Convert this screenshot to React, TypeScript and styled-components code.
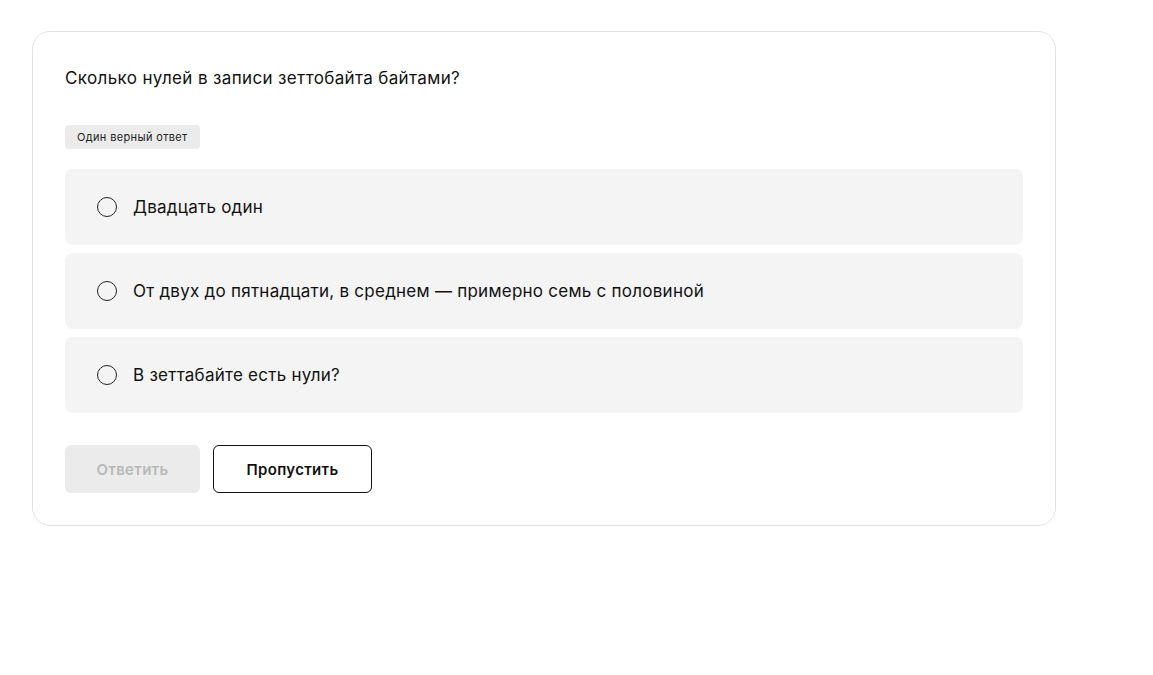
import React from "react";
import styled, { createGlobalStyle } from "styled-components";

const GlobalStyle = createGlobalStyle`
  html, body { margin: 0; padding: 0; background: #fff; }
  body { font-family: Inter, "Noto Sans", Arial, sans-serif; color: #111; }
  * { box-sizing: border-box; }
`;

const Page = styled.div`
  padding: 31px 0 0 32px;
`;

const Card = styled.section`
  width: 1024px;
  border: 1px solid #e2e2e2;
  border-radius: 18px;
  padding: 34px 32px 32px 32px;
  display: flex;
  flex-direction: column;
`;

const Question = styled.h2`
  margin: 0;
  font-size: 17px;
  font-weight: 400;
  line-height: 24px;
  letter-spacing: 0.36px;
  color: #111;
`;

const Badge = styled.span`
  align-self: flex-start;
  margin-top: 35px;
  background: #ebebeb;
  border-radius: 4px;
  padding: 0 12px;
  height: 24px;
  line-height: 24px;
  font-size: 11px;
  letter-spacing: 0.35px;
  color: #222;
`;

const Options = styled.div`
  margin-top: 20px;
  display: flex;
  flex-direction: column;
  gap: 8px;
`;

const Option = styled.label`
  display: flex;
  align-items: center;
  gap: 16px;
  height: 76px;
  padding: 0 32px;
  background: #f4f4f4;
  border-radius: 8px;
  font-size: 17px;
  letter-spacing: 0.25px;
  color: #111;
  cursor: pointer;
`;

const Radio = styled.span`
  width: 20px;
  height: 20px;
  border-radius: 50%;
  border: 1.5px solid #222;
  flex: none;
`;

const Actions = styled.div`
  margin-top: 32px;
  display: flex;
  gap: 13px;
`;

const Button = styled.button<{ $variant: "disabled" | "outline" }>`
  height: 48px;
  border-radius: 6px;
  font-family: inherit;
  font-size: 15px;
  font-weight: 600;
  letter-spacing: 0.3px;
  padding: 0;
  width: ${(p) => (p.$variant === "disabled" ? "135px" : "159px")};
  background: ${(p) => (p.$variant === "disabled" ? "#ebebeb" : "#fff")};
  color: ${(p) => (p.$variant === "disabled" ? "#b8b8b8" : "#111")};
  border: ${(p) => (p.$variant === "disabled" ? "none" : "1px solid #111")};
`;

const options = [
  "Двадцать один",
  "От двух до пятнадцати, в среднем — примерно семь с половиной",
  "В зеттабайте есть нули?",
];

export default function App() {
  return (
    <>
      <GlobalStyle />
      <Page>
        <Card>
          <Question>Сколько нулей в записи зеттобайта байтами?</Question>
          <Badge>Один верный ответ</Badge>
          <Options>
            {options.map((o) => (
              <Option key={o}>
                <Radio />
                {o}
              </Option>
            ))}
          </Options>
          <Actions>
            <Button $variant="disabled" disabled>Ответить</Button>
            <Button $variant="outline">Пропустить</Button>
          </Actions>
        </Card>
      </Page>
    </>
  );
}
